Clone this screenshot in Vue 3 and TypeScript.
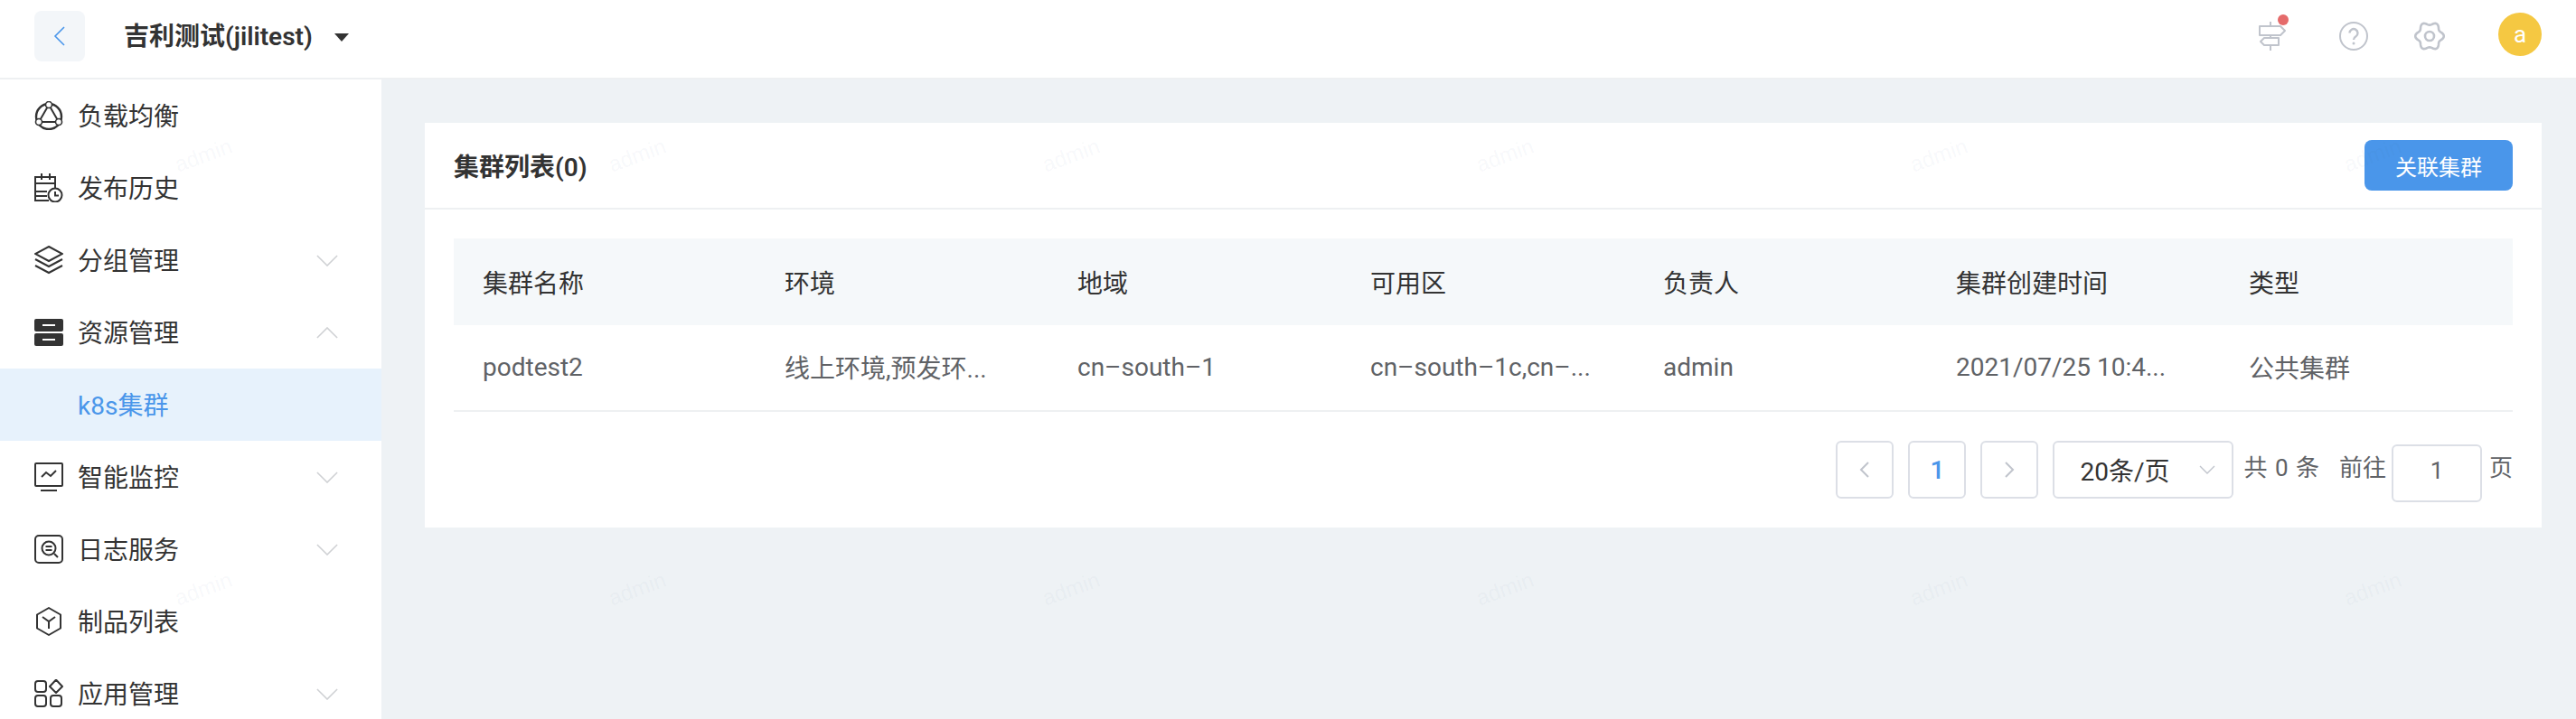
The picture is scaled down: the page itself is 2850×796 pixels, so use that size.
<template>
  <div class="page">
    <header class="topbar">
      <button class="back-btn" type="button">
        <svg width="14" height="22" viewBox="0 0 14 22" fill="none" stroke="#4a96ea" stroke-width="1.6">
          <polyline points="12,1 2,11 12,21" />
        </svg>
      </button>
      <div class="project">吉利测试(jilitest)</div>
      <span class="project-caret"></span>

      <div class="topbar-right">
        <span class="tool tool-post">
          <svg width="32" height="34" viewBox="0 0 32 34" fill="none" stroke="#c0c4cc" stroke-width="2" stroke-linejoin="round">
            <path d="M14 1v5M14 16v3M14 27v6" />
            <path d="M2 6h23l5 5-5 5H2z" />
            <path d="M23 19H7l-4 4 4 4h16z" />
          </svg>
          <i class="dot"></i>
        </span>
        <span class="tool tool-help">
          <svg width="32" height="32" viewBox="0 0 32 32" fill="none" stroke="#c0c4cc" stroke-width="2">
            <circle cx="16" cy="16" r="15" />
            <path d="M11.5 12.5a4.5 4.5 0 1 1 7 3.8c-1.600 1-2.500 1.900-2.500 3.700" stroke-width="2.400" />
            <circle cx="16" cy="24" r="1.500" fill="#c0c4cc" stroke="none" />
          </svg>
        </span>
        <span class="tool tool-gear">
          <svg width="34" height="34" viewBox="0 0 34 34" fill="none" stroke="#c0c4cc" stroke-width="2.600">
            <path :d="gearPath" />
            <circle cx="17" cy="17" r="5" />
          </svg>
        </span>
        <span class="avatar">a</span>
      </div>
    </header>

    <div class="body">
      <aside class="sidebar">
        <div
          v-for="item in menu"
          :key="item.label"
          class="menu-item"
          :class="{ active: item.active, child: item.child }"
        >
          <svg v-if="item.icon" class="menu-icon" width="32" height="32" viewBox="0 0 32 32" fill="none" stroke="#333" stroke-width="2">
            <template v-if="item.icon === 'balance'">
              <circle cx="16" cy="17" r="14" stroke-width="2.400" />
              <path d="M16 4 5 23h22z" />
              <circle cx="16" cy="4" r="3.500" fill="#fff" stroke-width="1.600" />
              <circle cx="5" cy="23" r="3.500" fill="#fff" stroke-width="1.600" />
              <circle cx="27" cy="23" r="3.500" fill="#fff" stroke-width="1.600" />
            </template>
            <template v-else-if="item.icon === 'history'">
              <path d="M16 30H1V4h22v12" />
              <path d="M8 0v7M17 0v7M1 11h22M1 20h13M1 25h13" />
              <circle cx="23" cy="24" r="7.500" fill="#fff" />
              <path d="M23 20v4.500h4" />
            </template>
            <template v-else-if="item.icon === 'layers'">
              <path d="M16 1 31 9l-15 8L1 9z" />
              <path d="M1 15l15 8 15-8M1 22l15 8 15-8" />
            </template>
            <template v-else-if="item.icon === 'server'">
              <rect x="0" y="1" width="32" height="14" rx="2" fill="#333" stroke="none" />
              <rect x="0" y="17" width="32" height="14" rx="2" fill="#333" stroke="none" />
              <path d="M9 8h14M9 24h14" stroke="#fff" />
            </template>
            <template v-else-if="item.icon === 'monitor'">
              <rect x="1" y="1" width="30" height="25" rx="1" />
              <path d="M7 31h18" />
              <polyline points="8,16 13,11 18,15 24,9" />
            </template>
            <template v-else-if="item.icon === 'log'">
              <rect x="1" y="1" width="30" height="30" rx="4" />
              <circle cx="16" cy="15" r="7.500" />
              <path d="M12.500 13h7M12.500 17h7M22 21l4 4" />
            </template>
            <template v-else-if="item.icon === 'box'">
              <path d="M16 1 29 8.500v15L16 31 3 23.500v-15z" stroke-linejoin="round" />
              <path d="M9 11l7 5 7-5M16 16v8" />
            </template>
            <template v-else-if="item.icon === 'apps'">
              <rect x="1" y="2" width="12" height="12" rx="3" />
              <rect x="1" y="18" width="12" height="12" rx="3" />
              <rect x="18" y="18" width="12" height="12" rx="3" />
              <path d="M24 0.500 31 8l-7 7-7-7z" stroke-linejoin="round" />
            </template>
          </svg>
          <span class="menu-label">{{ item.label }}</span>
          <svg v-if="item.arrow" class="menu-arrow" width="24" height="13" viewBox="0 0 26 14" fill="none" stroke="#cfd1d4" stroke-width="1.700">
            <polyline :points="item.arrow === 'up' ? '1,13 13,1 25,13' : '1,1 13,13 25,1'" />
          </svg>
        </div>
      </aside>

      <main class="content">
        <section class="card">
          <div class="card-head">
            <span class="card-title">集群列表(0)</span>
            <button class="primary-btn" type="button">关联集群</button>
          </div>
          <div class="card-body">
            <div class="table">
              <div class="tr th">
                <div v-for="col in columns" :key="col" class="cell">{{ col }}</div>
              </div>
              <div v-for="row in rows" :key="row[0]" class="tr td">
                <div v-for="(val, i) in row" :key="i" class="cell">{{ val }}</div>
              </div>
            </div>

            <div class="pager">
              <button class="pg-btn" type="button">
                <svg width="12" height="20" viewBox="0 0 12 20" fill="none" stroke="#c0c4cc" stroke-width="2"><polyline points="10,2 2,10 10,18" /></svg>
              </button>
              <button class="pg-btn current" type="button">1</button>
              <button class="pg-btn" type="button">
                <svg width="12" height="20" viewBox="0 0 12 20" fill="none" stroke="#c0c4cc" stroke-width="2"><polyline points="2,2 10,10 2,18" /></svg>
              </button>
              <div class="pg-select">
                <span>20条/页</span>
                <svg width="18" height="10" viewBox="0 0 18 10" fill="none" stroke="#c0c4cc" stroke-width="1.400"><polyline points="1,1 9,9 17,1" /></svg>
              </div>
              <span class="pg-total">共 0 条</span>
              <span class="pg-goto">前往</span>
              <input v-model="jumpPage" class="pg-input" />
              <span class="pg-unit">页</span>
            </div>
          </div>
        </section>
      </main>
    </div>

    <div class="watermark">
      <span v-for="n in 12" :key="n" class="mark">admin</span>
    </div>
  </div>
</template>

<script setup lang="ts">
import { ref } from 'vue';

interface MenuItem {
  label: string;
  icon?: string;
  arrow?: 'up' | 'down';
  active?: boolean;
  child?: boolean;
}

const menu: MenuItem[] = [
  { label: '负载均衡', icon: 'balance' },
  { label: '发布历史', icon: 'history' },
  { label: '分组管理', icon: 'layers', arrow: 'down' },
  { label: '资源管理', icon: 'server', arrow: 'up' },
  { label: 'k8s集群', active: true, child: true },
  { label: '智能监控', icon: 'monitor', arrow: 'down' },
  { label: '日志服务', icon: 'log', arrow: 'down' },
  { label: '制品列表', icon: 'box' },
  { label: '应用管理', icon: 'apps', arrow: 'down' },
];

const columns = ['集群名称', '环境', '地域', '可用区', '负责人', '集群创建时间', '类型'];

const rows = [
  [
    'podtest2',
    '线上环境,预发环...',
    'cn–south–1',
    'cn–south–1c,cn–...',
    'admin',
    '2021/07/25 10:4...',
    '公共集群',
  ],
];

const jumpPage = ref('1');

// 六瓣齿轮轮廓
const gearPath = (() => {
  const pts: string[] = [];
  for (let i = 0; i < 72; i++) {
    const a = (i / 72) * Math.PI * 2;
    const r = 14 + 1.8 * Math.cos(6 * a);
    pts.push(`${(17 + r * Math.cos(a)).toFixed(2)} ${(17 + r * Math.sin(a)).toFixed(2)}`);
  }
  return `M${pts.join('L')}Z`;
})();
</script>

<style>
html,
body {
  margin: 0;
  background: #eef2f5;
}
</style>

<style scoped>
.page {
  position: relative;
  display: flex;
  flex-direction: column;
  height: 796px;
  overflow: hidden;
  font-family: Roboto, "Noto Sans CJK SC", sans-serif;
  font-size: 28px;
  color: #333;
  background: #eef2f5;
}

.topbar {
  flex: none;
  box-sizing: content-box;
  display: flex;
  align-items: center;
  height: 80px;
  padding: 0 38px 6px;
  background: #fff;
  border-bottom: 2px solid #eef0f2;
}

.back-btn {
  display: flex;
  align-items: center;
  justify-content: center;
  width: 56px;
  height: 56px;
  padding: 0;
  border: none;
  border-radius: 8px;
  background: #f3f6f9;
}

.project {
  margin-left: 43px;
  padding-bottom: 4px;
  font-weight: 600;
  color: #333;
}

.project-caret {
  margin-left: 24px;
  margin-top: 2px;
  border-style: solid;
  border-width: 9px 8px 0;
  border-color: #333 transparent transparent;
}

.topbar-right {
  display: flex;
  align-items: center;
  margin-left: auto;
}

.tool {
  position: relative;
  display: flex;
}

.tool-post {
  margin-right: 58px;
}

.tool-help {
  margin-right: 51px;
}

.tool-gear {
  margin-right: 59px;
}

.dot {
  position: absolute;
  top: -7px;
  right: -2px;
  width: 12px;
  height: 12px;
  border-radius: 50%;
  background: #e56b6b;
}

.avatar {
  display: flex;
  align-items: center;
  justify-content: center;
  width: 48px;
  height: 48px;
  margin-top: -4px;
  border-radius: 50%;
  font-size: 26px;
  color: #fff;
  background: #f5c842;
}

.body {
  flex: 1;
  display: flex;
  min-height: 0;
}

.sidebar {
  flex: none;
  width: 422px;
  background: #fff;
}

.menu-item {
  display: flex;
  align-items: center;
  height: 80px;
  padding: 0 48px 0 38px;
  box-sizing: border-box;
}

.menu-item.child {
  padding-left: 86px;
}

.menu-item.active {
  color: #4a96ea;
  background: #e7f2fc;
}

.menu-icon {
  flex: none;
  margin-right: 16px;
}

.menu-label {
  padding-bottom: 3px;
}

.menu-arrow {
  margin-left: auto;
}

.content {
  flex: 1;
  min-width: 0;
  padding: 48px 38px 0 48px;
}

.card {
  background: #fff;
}

.card-head {
  display: flex;
  align-items: center;
  justify-content: space-between;
  height: 94px;
  padding: 0 32px;
  border-bottom: 2px solid #eef0f2;
}

.card-title {
  font-weight: 600;
}

.primary-btn {
  width: 164px;
  height: 56px;
  padding: 0;
  border: none;
  border-radius: 8px;
  font-family: inherit;
  font-size: 24px;
  color: #fff;
  background: #4a96ea;
}

.card-body {
  padding: 32px;
}

.tr {
  display: grid;
  grid-template-columns: 334px repeat(6, 1fr);
  align-items: center;
}

.th {
  height: 96px;
  background: #f5f8fa;
}

.td {
  box-sizing: border-box;
  height: 96px;
  padding-bottom: 2px;
  color: #606266;
  border-bottom: 2px solid #eef0f2;
}

.cell {
  padding: 0 32px;
  white-space: nowrap;
}

.pager {
  display: flex;
  align-items: flex-start;
  justify-content: flex-end;
  margin-top: 32px;
  font-size: 26px;
  color: #606266;
}

.pg-btn,
.pg-select {
  box-sizing: border-box;
  display: flex;
  align-items: center;
  height: 64px;
  border: 2px solid #dcdfe6;
  border-radius: 6px;
  background: #fff;
}

.pg-btn {
  justify-content: center;
  width: 64px;
  margin-right: 16px;
  padding: 0;
  font-family: inherit;
  font-size: 28px;
  font-weight: 500;
}

.pg-btn.current {
  color: #4a96ea;
}

.pg-select {
  justify-content: space-between;
  width: 200px;
  padding: 0 18px 0 28px;
  font-size: 28px;
  color: #333;
}

.pg-total,
.pg-goto,
.pg-unit {
  line-height: 60px;
}

.pg-total {
  margin-left: 11px;
  word-spacing: 2px;
}

.pg-goto {
  margin-left: 22px;
  margin-right: 6px;
}

.pg-input {
  box-sizing: border-box;
  width: 100px;
  height: 64px;
  margin-top: 4px;
  margin-bottom: -4px;
  padding: 0 0 6px;
  border: 2px solid #dcdfe6;
  border-radius: 6px;
  outline: none;
  font-family: inherit;
  font-size: 26px;
  text-align: center;
  color: #606266;
}

.pg-unit {
  margin-left: 8px;
}

.watermark {
  position: absolute;
  top: -68px;
  left: -15px;
  display: grid;
  grid-template-columns: repeat(6, 480px);
  grid-auto-rows: 480px;
  pointer-events: none;
}

.mark {
  display: flex;
  align-items: center;
  justify-content: center;
  font-family: "Liberation Sans", sans-serif;
  font-size: 24px;
  color: rgba(60, 90, 130, 0.05);
  transform: rotate(-20deg);
}
</style>
